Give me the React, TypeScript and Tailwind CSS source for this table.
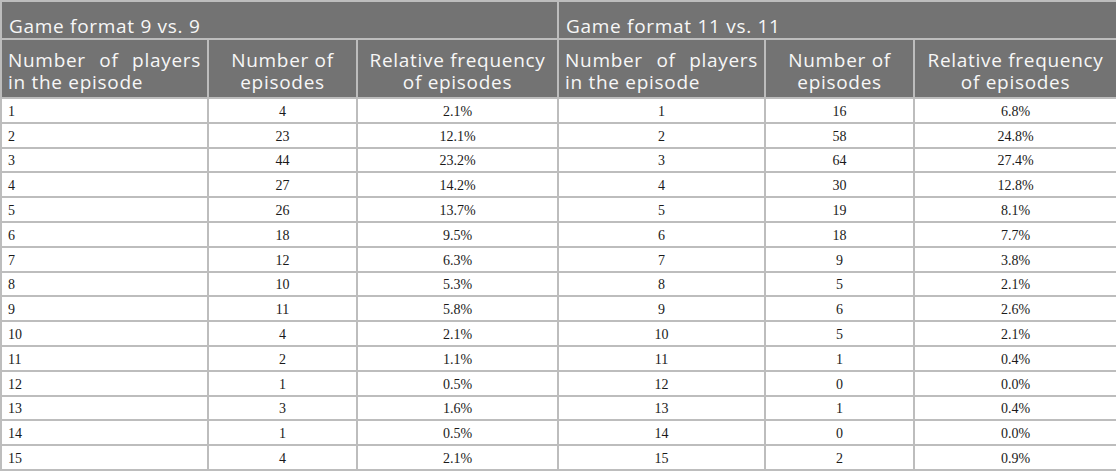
const rows9 = [
  ['1', '4', '2.1%'],
  ['2', '23', '12.1%'],
  ['3', '44', '23.2%'],
  ['4', '27', '14.2%'],
  ['5', '26', '13.7%'],
  ['6', '18', '9.5%'],
  ['7', '12', '6.3%'],
  ['8', '10', '5.3%'],
  ['9', '11', '5.8%'],
  ['10', '4', '2.1%'],
  ['11', '2', '1.1%'],
  ['12', '1', '0.5%'],
  ['13', '3', '1.6%'],
  ['14', '1', '0.5%'],
  ['15', '4', '2.1%'],
]

const rows11 = [
  ['1', '16', '6.8%'],
  ['2', '58', '24.8%'],
  ['3', '64', '27.4%'],
  ['4', '30', '12.8%'],
  ['5', '19', '8.1%'],
  ['6', '18', '7.7%'],
  ['7', '9', '3.8%'],
  ['8', '5', '2.1%'],
  ['9', '6', '2.6%'],
  ['10', '5', '2.1%'],
  ['11', '1', '0.4%'],
  ['12', '0', '0.0%'],
  ['13', '1', '0.4%'],
  ['14', '0', '0.0%'],
  ['15', '2', '0.9%'],
]

const th = 'border-2 border-[#bdbdbd] bg-[#737373] text-[#f7f7f7] font-normal'
const sub = `${th} h-[59px] px-[6px] pt-[4px] pb-0 align-middle leading-[22px]`
const td = 'border-2 border-[#bdbdbd] h-[24.8px] px-[6px] pt-[3px] pb-0 text-[14px] text-[#1a1a1a] leading-[14px]'

function SubHeaders() {
  return (
    <>
      <th className={`${sub} [text-align:justify] [text-align-last:left]`}>
        Number of players in the episode
      </th>
      <th className={`${sub} text-center`}>Number of episodes</th>
      <th className={`${sub} text-center`}>Relative frequency of episodes</th>
    </>
  )
}

export default function App() {
  return (
    <div className="w-[1116px] h-[471px] bg-white overflow-hidden">
      <table className="w-[1116px] border-collapse table-fixed">
        <colgroup>
          <col className="w-[207px]" />
          <col className="w-[149px]" />
          <col className="w-[201px]" />
          <col className="w-[207px]" />
          <col className="w-[149px]" />
          <col className="w-[203px]" />
        </colgroup>
        <thead className="font-['Open_Sans',sans-serif] text-[19px] tracking-[0.7px]">
          <tr>
            <th colSpan={3} className={`${th} h-[38px] px-[7px] pt-0 pb-0 align-bottom text-left leading-[23px]`}>
              Game format 9 vs. 9
            </th>
            <th colSpan={3} className={`${th} h-[38px] px-[7px] pt-0 pb-0 align-bottom text-left leading-[23px]`}>
              Game format 11 vs. 11
            </th>
          </tr>
          <tr>
            <SubHeaders />
            <SubHeaders />
          </tr>
        </thead>
        <tbody className="font-['Liberation_Serif',serif]">
          {rows9.map((r, i) => (
            <tr key={i}>
              <td className={`${td} text-left`}>{r[0]}</td>
              <td className={`${td} text-center`}>{r[1]}</td>
              <td className={`${td} text-center`}>{r[2]}</td>
              <td className={`${td} text-center`}>{rows11[i][0]}</td>
              <td className={`${td} text-center`}>{rows11[i][1]}</td>
              <td className={`${td} text-center`}>{rows11[i][2]}</td>
            </tr>
          ))}
        </tbody>
      </table>
    </div>
  )
}
